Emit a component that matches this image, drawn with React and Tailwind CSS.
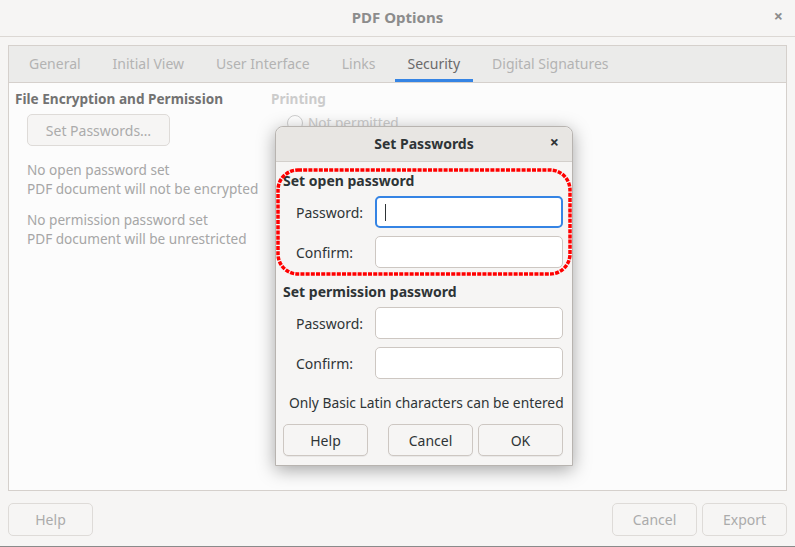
import React from "react";

const font = { fontFamily: '"Noto Sans", "DejaVu Sans", sans-serif' };

function Tab({ label, active }) {
  return (
    <div className="relative h-full flex items-center px-[13px] pb-[1px]">
      <span className={active ? "text-[#6a6a6a]" : "text-[#b3b3b3]"}>{label}</span>
      {active && <div className="absolute left-0 right-0 bottom-0 h-[3px] bg-[#3584e4]" />}
    </div>
  );
}

function Field({ label, focused }) {
  return (
    <div className="flex items-center h-[32px]">
      <div className="w-[92px] shrink-0 pl-[13px] text-[#2e3436]">{label}</div>
      <div
        className={
          "w-[188px] shrink-0 h-[32px] rounded-[5px] bg-white flex items-center " +
          (focused ? "border-2 border-[#3584e4] pl-[8px]" : "border border-[#cdc7c2]")
        }
      >
        {focused && <div className="w-[1px] h-[17px] bg-[#2e3436]" />}
      </div>
    </div>
  );
}

function DlgButton({ label }) {
  return (
    <div className="h-[32px] w-[85px] rounded-[5px] border border-[#cdc7c2] bg-[#f6f5f4] flex items-center justify-center text-[#2e3436] shadow-[0_1px_0_rgba(0,0,0,0.05)]">
      {label}
    </div>
  );
}

export default function App() {
  return (
    <div className="w-[795px] h-[547px] bg-[#f6f5f4] relative overflow-hidden text-[14px] leading-[19px] flex flex-col" style={font}>
      {/* Title bar */}
      <div className="h-[37px] shrink-0 border-b border-[#dcd8d4] flex items-center justify-center relative rounded-t-[8px] pb-[1px]">
        <span className="font-bold text-[15px] text-[#8c8c8c]">PDF Options</span>
        <span className="absolute right-[12px] top-[7px] text-[#8c8c8c] text-[16px] font-bold">×</span>
      </div>

      {/* Notebook */}
      <div className="mx-[8px] mt-[8px] h-[446px] border border-[#d5d0cc] bg-[#fcfcfc] flex flex-col">
        <div className="h-[37px] shrink-0 bg-[#ebebea] border-b border-[#d5d0cc] flex items-stretch pl-[7px] gap-[6px]">
          <Tab label="General" />
          <Tab label="Initial View" />
          <Tab label="User Interface" />
          <Tab label="Links" />
          <Tab label="Security" active />
          <Tab label="Digital Signatures" />
        </div>
        <div className="flex pt-[6px] pl-[6px] text-[13.6px]">
          <div className="w-[256px]">
            <div className="font-bold text-[#727272]">File Encryption and Permission</div>
            <div className="ml-[12px] mt-[6px] w-[143px] h-[32px] rounded-[5px] border border-[#dedbd8] bg-[#f6f5f4] flex items-center justify-center text-[#ababab] text-[14px]">
              Set Passwords…
            </div>
            <div className="ml-[12px] mt-[14px] text-[#a6a6a6]">
              <div>No open password set</div>
              <div>PDF document will not be encrypted</div>
              <div className="mt-[12px]">No permission password set</div>
              <div>PDF document will be unrestricted</div>
            </div>
          </div>
          <div>
            <div className="font-bold text-[#cccccc]">Printing</div>
            <div className="ml-[16px] mt-[5px] flex items-center gap-[5px] text-[#cccccc]">
              <div className="w-[16px] h-[16px] rounded-full border border-[#cfcfcf] bg-white" />
              <span>Not permitted</span>
            </div>
          </div>
        </div>
      </div>

      {/* Bottom buttons */}
      <div className="flex mx-[8px] mt-[12px] items-center">
        <div className="h-[33px] w-[85px] rounded-[5px] border border-[#dedbd8] flex items-center justify-center text-[#ababab]">Help</div>
        <div className="flex-1" />
        <div className="h-[33px] w-[85px] rounded-[5px] border border-[#dedbd8] flex items-center justify-center text-[#ababab]">Cancel</div>
        <div className="h-[33px] w-[85px] ml-[5px] rounded-[5px] border border-[#dedbd8] flex items-center justify-center text-[#ababab]">Export</div>
      </div>
      <div className="absolute left-0 right-0 bottom-0 h-[1px] bg-[#8a8a8a]" />

      {/* Set Passwords dialog */}
      <div className="absolute left-[275px] top-[126px] w-[298px] h-[340px] bg-[#f6f5f4] border border-[#b8b4b0] rounded-t-[8px] shadow-[0_4px_18px_rgba(0,0,0,0.35)] flex flex-col">
        <div className="h-[35px] shrink-0 bg-[#e8e6e3] border-b border-[#d3cfcb] rounded-t-[8px] flex items-center justify-center relative pb-[1px]">
          <span className="font-bold text-[#2e3436]">Set Passwords</span>
          <span className="absolute right-[13px] top-[6px] font-bold text-[16px] text-[#2e3436]">×</span>
        </div>
        <div className="pl-[7px] pt-[9px] flex flex-col">
          <div className="font-bold text-[#2e3436]">Set open password</div>
          <div className="mt-[6px] flex flex-col gap-[8px]">
            <Field label="Password:" focused />
            <Field label="Confirm:" />
          </div>
          <div className="mt-[14px] font-bold text-[#2e3436]">Set permission password</div>
          <div className="mt-[6px] flex flex-col gap-[8px]">
            <Field label="Password:" />
            <Field label="Confirm:" />
          </div>
          <div className="mt-[14px] pl-[6px] text-[#2e3436] text-[13.8px]">Only Basic Latin characters can be entered</div>
          <div className="mt-[12px] flex">
            <DlgButton label="Help" />
            <div className="w-[20px]" />
            <DlgButton label="Cancel" />
            <div className="w-[5px]" />
            <DlgButton label="OK" />
          </div>
        </div>
        {/* red annotation */}
        <svg className="absolute left-[0px] top-[41px]" width="296" height="108" viewBox="0 0 296 108">
          <rect x="2" y="2" width="292" height="104" rx="20" ry="20" fill="none" stroke="#ff0000" strokeWidth="3.5" strokeDasharray="4 1.2" />
        </svg>
      </div>
    </div>
  );
}
